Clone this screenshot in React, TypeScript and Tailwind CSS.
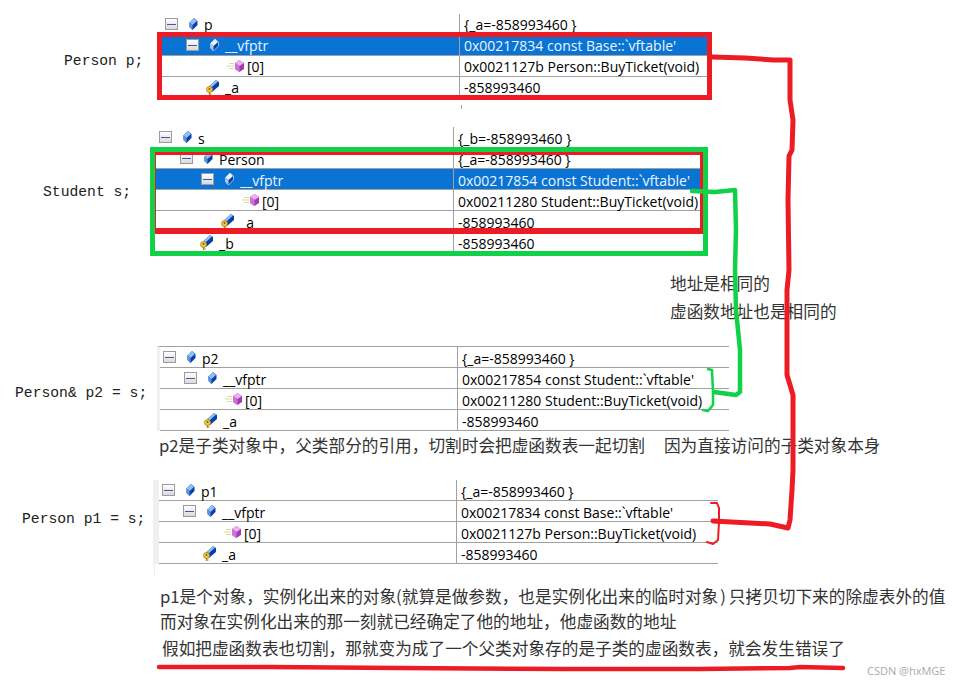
import type { ReactNode } from "react";

type Kind = "expand" | "method" | "field";

interface Row {
  kind: Kind;
  level: number;
  name: string;
  value: string;
  selected?: boolean;
}

const TABLE_FONT = "font-['Open_Sans','Liberation_Sans',sans-serif] text-[14px]";
const CJK_FONT = "font-['Noto_Sans_CJK_SC',sans-serif] text-[16.67px] text-[#333]";

const expandPad = ["pl-[3px]", "pl-[24px]", "pl-[45px]"];
const fieldPad = ["pl-[23px]", "pl-[44px]", "pl-[65px]"];
const methodPad = ["pl-[23px]", "pl-[44px]", "pl-[65px]", "pl-[86px]"];

function Cube({ pale }: { pale?: boolean }) {
  return (
    <svg width="9" height="12" viewBox="0 0 9 12" className="shrink-0">
      <polygon points="5,0 8.5,3 8.5,7 3.5,12 0.5,9 0.5,4.5" fill="#0b3fa8" stroke={pale ? "#d6e6fa" : "none"} strokeWidth="0.7" />
      <polygon points="5,0 8,3 3.5,7 0.5,4.5" fill={pale ? "#eaf3fd" : "#8fc0f2"} />
      <polygon points="0.5,4.5 3.5,7 3.5,12 0.5,9" fill={pale ? "#a9cbf3" : "#5a97e2"} />
    </svg>
  );
}

function MethodIcon() {
  return (
    <svg width="18" height="12" viewBox="0 0 18 12" className="shrink-0">
      <path d="M2 3.5h5M0 6h7M2 8.5h5" stroke="#e0da98" strokeWidth="1" />
      <polygon points="12.5,0 17,3 17,9 12.5,12 8,9 8,3" fill="#a23cb0" />
      <polygon points="12.5,0 17,3 12.5,6 8,3" fill="#eeb0f0" />
      <polygon points="8,3 12.5,6 12.5,12 8,9" fill="#d070d8" />
    </svg>
  );
}

function FieldIcon() {
  return (
    <svg width="14" height="15" viewBox="0 0 14 15" className="shrink-0">
      <polygon points="10,0 13,2 13,6 6,12 3.5,10 3.5,6" fill="#0b3fa8" />
      <polygon points="10,0 12,1.5 5.5,7.5 3.5,6" fill="#8fc0f2" />
      <circle cx="3.5" cy="9.5" r="3" fill="#f2c93c" stroke="#a8801c" strokeWidth="0.8" />
      <path d="M3.5 12v3M3.5 14h2" stroke="#a8801c" strokeWidth="1.2" />
      <circle cx="3.5" cy="9" r="0.9" fill="#7a5a10" />
    </svg>
  );
}

function ExpandBox() {
  return (
    <div className="w-[13px] h-[12px] shrink-0 flex items-center justify-center border border-[#9c9c9c] bg-gradient-to-b from-white to-[#dadada]">
      <div className="w-[9px] h-px bg-[#3a5aa8]" />
    </div>
  );
}

function NameCell({ row, textPad }: { row: Row; textPad: string }) {
  if (row.kind === "expand") {
    return (
      <div className={`flex items-center w-[297px] ${expandPad[row.level]}`}>
        <ExpandBox />
        <div className="w-[11px]" />
        <Cube pale={row.selected} />
        <span className={`ml-[6px] ${textPad}`}>{row.name}</span>
      </div>
    );
  }
  if (row.kind === "method") {
    return (
      <div className={`flex items-center w-[297px] ${methodPad[row.level]}`}>
        <MethodIcon />
        <span className={`ml-[2px] ${textPad}`}>{row.name}</span>
      </div>
    );
  }
  return (
    <div className={`flex items-center w-[297px] ${fieldPad[row.level]}`}>
      <FieldIcon />
      <span className={`ml-[5px] ${textPad}`}>{row.name}</span>
    </div>
  );
}

function WatchTable({
  rows,
  className,
  textPad = "pt-[3px]",
  children,
}: {
  rows: Row[];
  className: string;
  textPad?: string;
  children?: ReactNode;
}) {
  return (
    <div className={`relative ${TABLE_FONT} text-black ${className}`}>
      {rows.map((row, i) => (
        <div
          key={i}
          className={`flex h-[21px] border-b border-[#a0a0a0] whitespace-pre ${row.selected ? "bg-[#0a74d4] text-[#eef5fc]" : ""}`}
        >
          <NameCell row={row} textPad={textPad} />
          <div className={`flex-1 flex items-center border-l border-[#a0a0a0] pl-[4px] ${textPad}`}>{row.value}</div>
        </div>
      ))}
      {children}
    </div>
  );
}

function Label({ text }: { text: string }) {
  return (
    <div className="shrink-0 h-[20px] leading-[20px] font-['Liberation_Mono',monospace] text-[14.7px] text-[#222] whitespace-pre">
      {text}
    </div>
  );
}

const pRows: Row[] = [
  { kind: "expand", level: 0, name: "p", value: "{_a=-858993460 }" },
  { kind: "expand", level: 1, name: "__vfptr", value: "0x00217834 const Base::`vftable'", selected: true },
  { kind: "method", level: 2, name: "[0]", value: "0x0021127b Person::BuyTicket(void)" },
  { kind: "field", level: 1, name: "_a", value: "-858993460" },
];

const sRows: Row[] = [
  { kind: "expand", level: 0, name: "s", value: "{_b=-858993460 }" },
  { kind: "expand", level: 1, name: "Person", value: "{_a=-858993460 }" },
  { kind: "expand", level: 2, name: "__vfptr", value: "0x00217854 const Student::`vftable'", selected: true },
  { kind: "method", level: 3, name: "[0]", value: "0x00211280 Student::BuyTicket(void)" },
  { kind: "field", level: 2, name: "_a", value: "-858993460" },
  { kind: "field", level: 1, name: "_b", value: "-858993460" },
];

const p2Rows: Row[] = [
  { kind: "expand", level: 0, name: "p2", value: "{_a=-858993460 }" },
  { kind: "expand", level: 1, name: "__vfptr", value: "0x00217854 const Student::`vftable'" },
  { kind: "method", level: 2, name: "[0]", value: "0x00211280 Student::BuyTicket(void)" },
  { kind: "field", level: 1, name: "_a", value: "-858993460" },
];

const p1Rows: Row[] = [
  { kind: "expand", level: 0, name: "p1", value: "{_a=-858993460 }" },
  { kind: "expand", level: 1, name: "__vfptr", value: "0x00217834 const Base::`vftable'" },
  { kind: "method", level: 2, name: "[0]", value: "0x0021127b Person::BuyTicket(void)" },
  { kind: "field", level: 1, name: "_a", value: "-858993460" },
];

export default function App() {
  return (
    <div className="relative w-[955px] h-[684px] overflow-hidden bg-white">
      {/* Person p */}
      <div className="flex pt-[14px]">
        <div className="w-[162px] shrink-0 pt-[37px] pl-[64px]">
          <Label text="Person p;" />
        </div>
        <WatchTable rows={pRows} className="w-[550px]" textPad="pt-[1px]">
          <div className="absolute -left-[5px] right-0 top-[18px] -bottom-[2px] border-[5px] border-[#ed1c24]" />
          <div className="absolute left-[299px] top-[91px] w-px h-[4px] bg-[#a0a0a0]" />
        </WatchTable>
      </div>

      {/* Student s */}
      <div className="flex mt-[29px]">
        <div className="w-[156px] shrink-0 pt-[55px] pl-[43px]">
          <Label text="Student s;" />
        </div>
        <WatchTable rows={sRows} className="w-[547px]">
          <div className="absolute -left-[6px] -right-[5px] top-[20px] -bottom-[3px] border-[5px] border-[#11d148]" />
          <div className="absolute -left-px right-0 top-[25px] bottom-[19px] border-t-[3px] border-r-[3px] border-b-[6px] border-l border-[#ed1c24]" />
        </WatchTable>
      </div>

      <div className={`ml-[670px] mt-[16px] leading-[28px] ${CJK_FONT}`}>
        <p>地址是相同的</p>
        <p>虚函数地址也是相同的</p>
      </div>

      {/* Person& p2 */}
      <div className="flex mt-[21px]">
        <div className="w-[157px] shrink-0 pt-[37px] pl-[15px]">
          <Label text="Person& p2 = s;" />
        </div>
        <WatchTable rows={p2Rows} className="w-[572px] border-l-[3px] border-t border-[#f0f0f0] border-t-[#a0a0a0]" />
      </div>
      <div className={`flex mt-[2px] ml-[159px] h-[24px] leading-[24px] whitespace-pre ${CJK_FONT}`}>
        <span>p2是子类对象中，父类部分的引用，切割时会把虚函数表一起切割</span>
        <span className="ml-[19px]">因为直接访问的子类对象本身</span>
      </div>

      {/* Person p1 */}
      <div className="flex mt-[23px]">
        <div className="w-[153px] shrink-0 pt-[29px] pl-[22px]">
          <Label text="Person p1 = s;" />
        </div>
        <WatchTable rows={p1Rows} className="w-[565px] border-l-[6px] border-[#f0f0f0]">
          <div className="absolute top-full -left-[5px] w-px h-[11px] bg-[#ececec]" />
        </WatchTable>
      </div>

      <div className={`mt-[19px] ml-[160px] whitespace-pre leading-[26px] ${CJK_FONT}`}>
        <p className="h-[25px]">
          p1是个对象，实例化出来的对象(就算是做参数，也是实例化出来的临时对象<span className="ml-[2px] mr-[3px]">)</span>只拷贝切下来的除虚表外的值
        </p>
        <p className="h-[27px]">而对象在实例化出来的那一刻就已经确定了他的地址，他虚函数的地址</p>
        <p className="h-[26px] ml-[2px]">假如把虚函数表也切割，那就变为成了一个父类对象存的是子类的虚函数表，就会发生错误了</p>
      </div>

      {/* hand drawn strokes on top of the screenshot */}
      <svg className="absolute inset-0 pointer-events-none" width="955" height="684" viewBox="0 0 955 684" fill="none" strokeLinecap="round" strokeLinejoin="round">
        <path d="M712 57 L745 58 L773 60 L790 60 L790 100 L793 120 L792 150 L789 156 L788 200 L789 270 L787 290 L787 375 L793 395 L793 470 L792 490 L790 520 L788 528 L770 524 L713 521" stroke="#ed1c24" strokeWidth="5" />
        <path d="M692 191 L715 192 L735 190 L736 230 L735 270 L736 310 L740 350 L740 392 L736 395 L714 392" stroke="#11d148" strokeWidth="4.5" />
        <path d="M708 369 L712 370 L713 392 L713 405 L708 411 L703 410" stroke="#11d148" strokeWidth="2.5" />
        <path d="M711 503 L717 503 L719 508 L719 522 L718 540 L713 544 L707 542" stroke="#ed1c24" strokeWidth="2" />
        <path d="M159 667 L270 667 L400 668 L570 669 L700 669 L790 668 L800 667 L843 668" stroke="#ed1c24" strokeWidth="4.5" />
      </svg>

      <div className="absolute left-[867px] top-[663px] font-['Open_Sans',sans-serif] text-[11px] text-[#aaaaaa] whitespace-pre">CSDN @hxMGE</div>
    </div>
  );
}
